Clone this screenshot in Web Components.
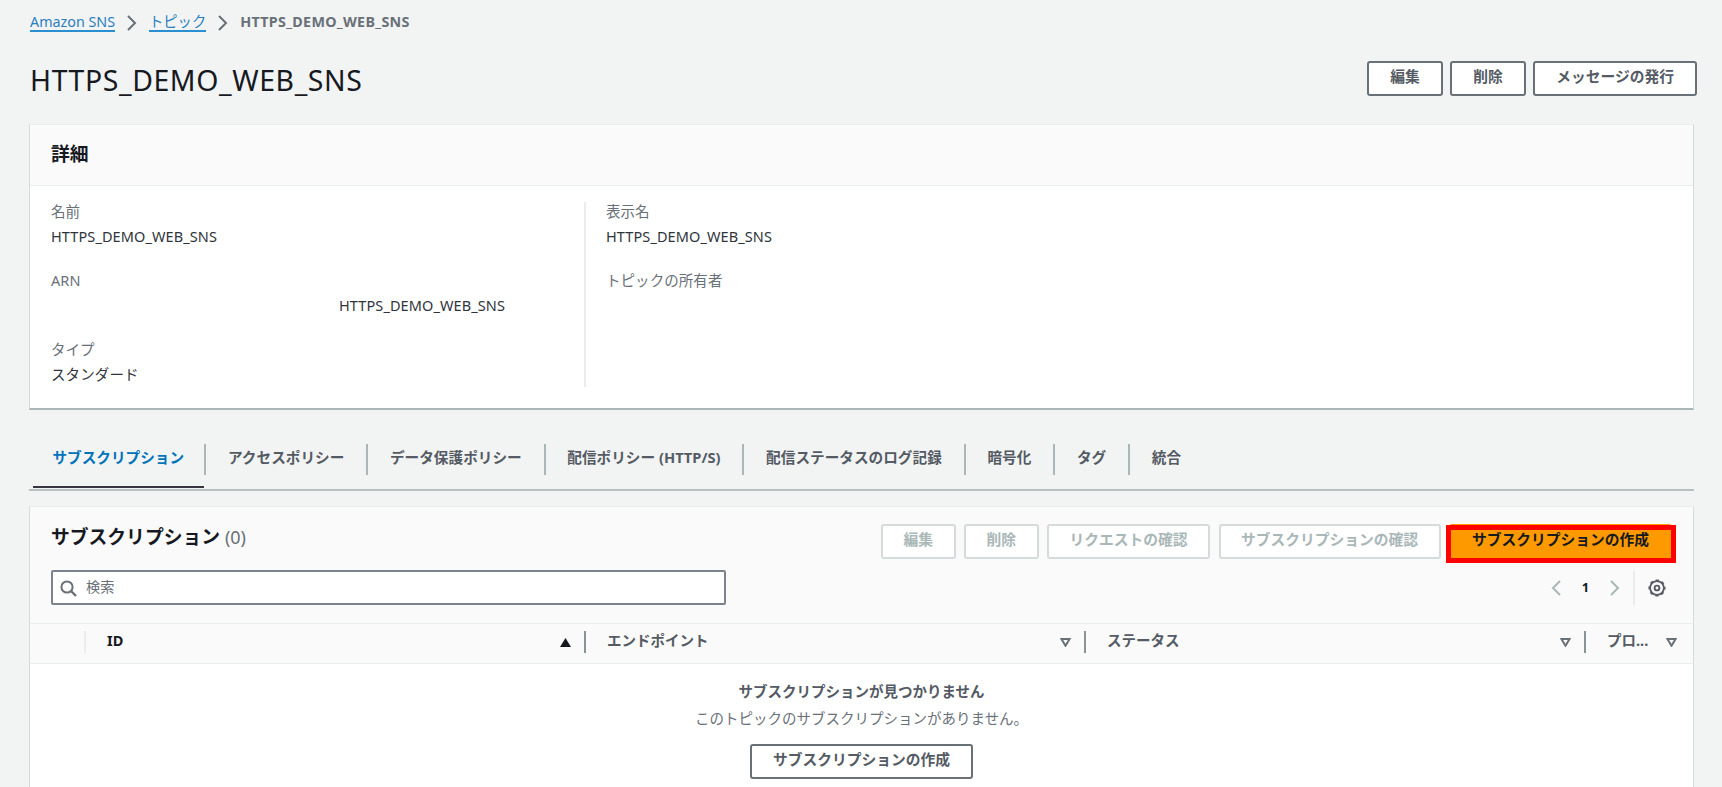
<!DOCTYPE html>
<html lang="ja">
<head>
<meta charset="UTF-8">
<title>Amazon SNS</title>
<style>
    :root {
        --cor-text: #16191f;
        --cor-sub: #545b64;
        --cor-label: #687078;
        --cor-link: #0073bb;
        --cor-borda: #eaeded;
        --cor-linha: #aab7b8;
        --cor-laranja: #ff9900;
    }
    html, body { height: 100%; }
    body {
        margin: 0;
        overflow: hidden;
        background: #f2f3f3;
        color: var(--cor-text);
        font-family: "Noto Sans", "Noto Sans CJK JP", sans-serif;
        font-size: 14.5px;
        line-height: 22px;
    }
</style>
</head>
<body>
<sns-page></sns-page>

<script>
class SnsBreadcrumb extends HTMLElement {
    constructor() {
        super();
        this.attachShadow({ mode: 'open' });
    }

    connectedCallback() {
        const itens = this.getAttribute('items').split('|');
        const seta = '<svg width="10" height="16" viewBox="0 0 10 16"><path d="M1 1l7 7-7 7" fill="none" stroke="#687078" stroke-width="2"/></svg>';
        this.shadowRoot.innerHTML = `
            <style>
                :host { display: flex; align-items: center; height: 22px; padding-left: 1px; font-size: 14.3px; color: var(--cor-label); }
                a { color: #2a7fc0; height: 19px; line-height: 21px; border-bottom: 2px solid #2a8fd0; white-space: nowrap; }
                svg { margin: 3px 12px 0; }
                b { margin-top: 1px; letter-spacing: 0.3px; white-space: nowrap; }
            </style>
            ${itens.map((item, i) => i < itens.length - 1 ? `<a>${item}</a>${seta}` : `<b>${item}</b>`).join('')}
        `;
    }
}

class AwsButton extends HTMLElement {
    constructor() {
        super();
        this.attachShadow({ mode: 'open' });
        this.shadowRoot.innerHTML = `
            <style>
                :host { display: inline-block; box-sizing: border-box; height: 35px; padding: 0 21px; border: 2px solid #687078; border-radius: 3px; background: white; color: var(--cor-sub); font-weight: bold; font-size: 14.75px; line-height: 26px; text-align: center; white-space: nowrap; }
                :host([disabled]) { padding: 0 20.5px; border-color: #d5dbdb; color: var(--cor-linha); line-height: 27px; }
                :host([primary]) { border-color: var(--cor-laranja); background: var(--cor-laranja); color: var(--cor-text); line-height: 27px; }
            </style>
            <slot></slot>
        `;
    }
}

class AwsContainer extends HTMLElement {
    constructor() {
        super();
        this.attachShadow({ mode: 'open' });
        this.shadowRoot.innerHTML = `
            <style>
                :host { display: block; box-sizing: border-box; background: white; border: 1px solid #d5dbdb; border-top-color: var(--cor-borda); }
                header { background: #fafafa; border-bottom: 1px solid var(--cor-borda); }
            </style>
            <header><slot name="header"></slot></header>
            <slot></slot>
        `;
    }
}

class KeyValue extends HTMLElement {
    constructor() {
        super();
        this.attachShadow({ mode: 'open' });
    }

    connectedCallback() {
        this.shadowRoot.innerHTML = `
            <style>
                :host { display: block; height: 69px; line-height: 25px; letter-spacing: 0.06px; }
                dt { color: var(--cor-label); }
                dd { margin: 0; min-height: 25px; color: #2f343b; letter-spacing: 0.1px; }
            </style>
            <dt>${this.getAttribute('label')}</dt>
            <dd><slot></slot></dd>
        `;
    }
}

class AwsTabs extends HTMLElement {
    constructor() {
        super();
        this.attachShadow({ mode: 'open' });
    }

    connectedCallback() {
        const abas = this.getAttribute('tabs').split('|');
        this.shadowRoot.innerHTML = `
            <style>
                :host { display: flex; box-sizing: border-box; height: 54px; padding-left: 1px; border-bottom: 2px solid #b6c1c2; color: var(--cor-sub); font-weight: bold; font-size: 14.65px; }
                .aba { display: flex; height: 31px; padding: 7px 0 14px; }
                span { padding: 0 21.8px; line-height: 27px; height: 31px; border-right: 2px solid var(--cor-linha); white-space: nowrap; }
                .aba:last-child span { border: 0; }
                .ativa { margin-left: 2px; color: var(--cor-link); position: relative; }
                .ativa span { padding: 0 20px 0 20.4px; }
                .ativa::after { content: ""; position: absolute; left: 1px; right: 2px; bottom: 1px; height: 2px; background: #3a3440; }
            </style>
            ${abas.map((aba, i) => `<div class="aba ${i ? '' : 'ativa'}"><span>${aba}</span></div>`).join('')}
        `;
    }
}

class SearchField extends HTMLElement {
    constructor() {
        super();
        this.attachShadow({ mode: 'open' });
        this.shadowRoot.innerHTML = `
            <style>
                :host { display: flex; align-items: center; box-sizing: border-box; width: 675px; height: 35px; padding-left: 7px; gap: 9px; border: 2px solid #7b848c; border-radius: 2px; background: white; color: var(--cor-label); font-size: 14.2px; }
                svg { margin-top: 2px; }
                span { margin-top: -2px; }
            </style>
            <svg width="17" height="17" viewBox="0 0 17 17" fill="none" stroke="#687078" stroke-width="2"><circle cx="7" cy="7" r="5.6"/><path d="M11 11l5 5" stroke-width="2.4"/></svg>
            <span><slot></slot></span>
        `;
    }
}

class TablePager extends HTMLElement {
    constructor() {
        super();
        this.attachShadow({ mode: 'open' });
        this.shadowRoot.innerHTML = `
            <style>
                :host { display: flex; align-items: center; height: 35px; font-size: 13px; }
                b { width: 49px; text-align: center; line-height: 35px; }
                i { width: 2px; height: 34px; margin: 0 13px; background: var(--cor-borda); }
            </style>
            <svg width="10" height="16" viewBox="0 0 10 16"><path d="M9 1L2 8l7 7" fill="none" stroke="#aab7b8" stroke-width="2"/></svg>
            <b>1</b>
            <svg width="10" height="16" viewBox="0 0 10 16"><path d="M1 1l7 7-7 7" fill="none" stroke="#aab7b8" stroke-width="2"/></svg>
            <i></i>
            <svg width="18" height="18" viewBox="0 0 18 18" fill="none" stroke="#545b64"><circle cx="9" cy="9" r="6.9" stroke-width="1.8"/><circle cx="9" cy="9" r="7.9" stroke-width="1.4" stroke-dasharray="3.1 3.105" stroke-dashoffset="1.55"/><circle cx="9" cy="9" r="2.4" stroke-width="1.9"/></svg>
        `;
    }
}

class ColumnHead extends HTMLElement {
    constructor() {
        super();
        this.attachShadow({ mode: 'open' });
    }

    connectedCallback() {
        const seta = this.hasAttribute('sorted')
            ? '<path d="M0 9L5.5 0 11 9z" fill="#16191f"/>'
            : '<path d="M1.4 1h8.2L5.5 7.8z" fill="none" stroke="#687078" stroke-width="2"/>';
        this.shadowRoot.innerHTML = `
            <style>
                :host { display: flex; align-items: center; box-sizing: border-box; height: 22px; padding: 0 13px 0 21px; border-left: 2px solid #879596; color: var(--cor-sub); font-weight: bold; }
                :host([sorted]) { border-color: var(--cor-borda); color: var(--cor-text); }
                :host([last]) { padding-right: 0; }
                span { flex: 1; line-height: 18px; margin-top: -5px; white-space: nowrap; }
            </style>
            <span><slot></slot></span>
            <svg width="11" height="9" viewBox="0 0 11 9">${seta}</svg>
        `;
    }
}

class SnsPage extends HTMLElement {
    constructor() {
        super();
        this.attachShadow({ mode: 'open' });
    }

    connectedCallback() {
        const nome = 'HTTPS_DEMO_WEB_SNS';
        this.shadowRoot.innerHTML = `
            <style>
                :host { display: flex; flex-direction: column; padding: 10px 28px 0 29px; }
                .topo { display: flex; justify-content: space-between; height: 35px; margin: 29px -3px 28px 1px; }
                h1 { margin: 0; font-size: 28.4px; font-weight: normal; line-height: 39px; letter-spacing: 0.6px; }
                .botoes { display: flex; gap: 7.5px; }
                .barra .botoes { gap: 8.5px; }
                h2 { margin: 0; font-size: 18.8px; line-height: 26px; }
                h2 small { font-size: 18px; font-weight: normal; color: var(--cor-label); }
                .detalhes { height: 286px; border-bottom: 2px solid var(--cor-linha); }
                .detalhes h2 { padding: 16px 21px 18px; }
                .colunas { display: grid; grid-template-columns: 533px 1fr; padding: 16px 0 0 21px; }
                .coluna { height: 185px; }
                .coluna + .coluna { border-left: 2px solid var(--cor-borda); padding-left: 20px; }
                .coluna key-value { margin-top: -3px; margin-bottom: 3px; }
                .arn { display: block; margin-left: 288px; }
                aws-tabs { margin-top: 27px; }
                .assinaturas { height: 300px; margin-top: 15px; }
                .barra { display: flex; justify-content: space-between; padding: 17px 21px 12px 21px; height: 34px; }
                .barra h2 { line-height: 26px; }
                .destaque { position: relative; }
                .destaque::after { content: ""; position: absolute; left: -3px; top: 1px; width: 220px; height: 28px; border: 5px solid #f00; }
                .filtro { display: flex; justify-content: space-between; padding: 0 27px 18px 21px; }
                .cabecalho { display: grid; grid-template-columns: 54px 500px 500px 500px 92.5px; align-items: start; box-sizing: border-box; height: 40px; padding-top: 7px; border-top: 1px solid var(--cor-borda); }
                .vazio { display: flex; flex-direction: column; align-items: center; padding-top: 14px; color: var(--cor-label); line-height: 27px; }
                .vazio b { color: var(--cor-sub); }
                .vazio p { margin: 0 0 12px; }
            </style>

            <sns-breadcrumb items="Amazon SNS|トピック|${nome}"></sns-breadcrumb>

            <div class="topo">
                <h1>${nome}</h1>
                <div class="botoes">
                    <aws-button>編集</aws-button>
                    <aws-button>削除</aws-button>
                    <aws-button>メッセージの発行</aws-button>
                </div>
            </div>

            <aws-container class="detalhes">
                <h2 slot="header">詳細</h2>
                <div class="colunas">
                    <div class="coluna">
                        <key-value label="名前">${nome}</key-value>
                        <key-value label="ARN"><span class="arn">${nome}</span></key-value>
                        <key-value label="タイプ">スタンダード</key-value>
                    </div>
                    <div class="coluna">
                        <key-value label="表示名">${nome}</key-value>
                        <key-value label="トピックの所有者"></key-value>
                    </div>
                </div>
            </aws-container>

            <aws-tabs tabs="サブスクリプション|アクセスポリシー|データ保護ポリシー|配信ポリシー (HTTP/S)|配信ステータスのログ記録|暗号化|タグ|統合"></aws-tabs>

            <aws-container class="assinaturas">
                <div slot="header">
                    <div class="barra">
                        <h2>サブスクリプション <small>(0)</small></h2>
                        <div class="botoes">
                            <aws-button disabled>編集</aws-button>
                            <aws-button disabled>削除</aws-button>
                            <aws-button disabled>リクエストの確認</aws-button>
                            <aws-button disabled>サブスクリプションの確認</aws-button>
                            <div class="destaque"><aws-button primary>サブスクリプションの作成</aws-button></div>
                        </div>
                    </div>
                    <div class="filtro">
                        <search-field>検索</search-field>
                        <table-pager></table-pager>
                    </div>
                    <div class="cabecalho">
                        <div></div>
                        <column-head sorted>ID</column-head>
                        <column-head>エンドポイント</column-head>
                        <column-head>ステータス</column-head>
                        <column-head last>プロ...</column-head>
                    </div>
                </div>
                <div class="vazio">
                    <b>サブスクリプションが見つかりません</b>
                    <p>このトピックのサブスクリプションがありません。</p>
                    <aws-button>サブスクリプションの作成</aws-button>
                </div>
            </aws-container>
        `;
    }
}

customElements.define('sns-breadcrumb', SnsBreadcrumb);
customElements.define('aws-button', AwsButton);
customElements.define('aws-container', AwsContainer);
customElements.define('key-value', KeyValue);
customElements.define('aws-tabs', AwsTabs);
customElements.define('search-field', SearchField);
customElements.define('table-pager', TablePager);
customElements.define('column-head', ColumnHead);
customElements.define('sns-page', SnsPage);
</script>
</body>
</html>
